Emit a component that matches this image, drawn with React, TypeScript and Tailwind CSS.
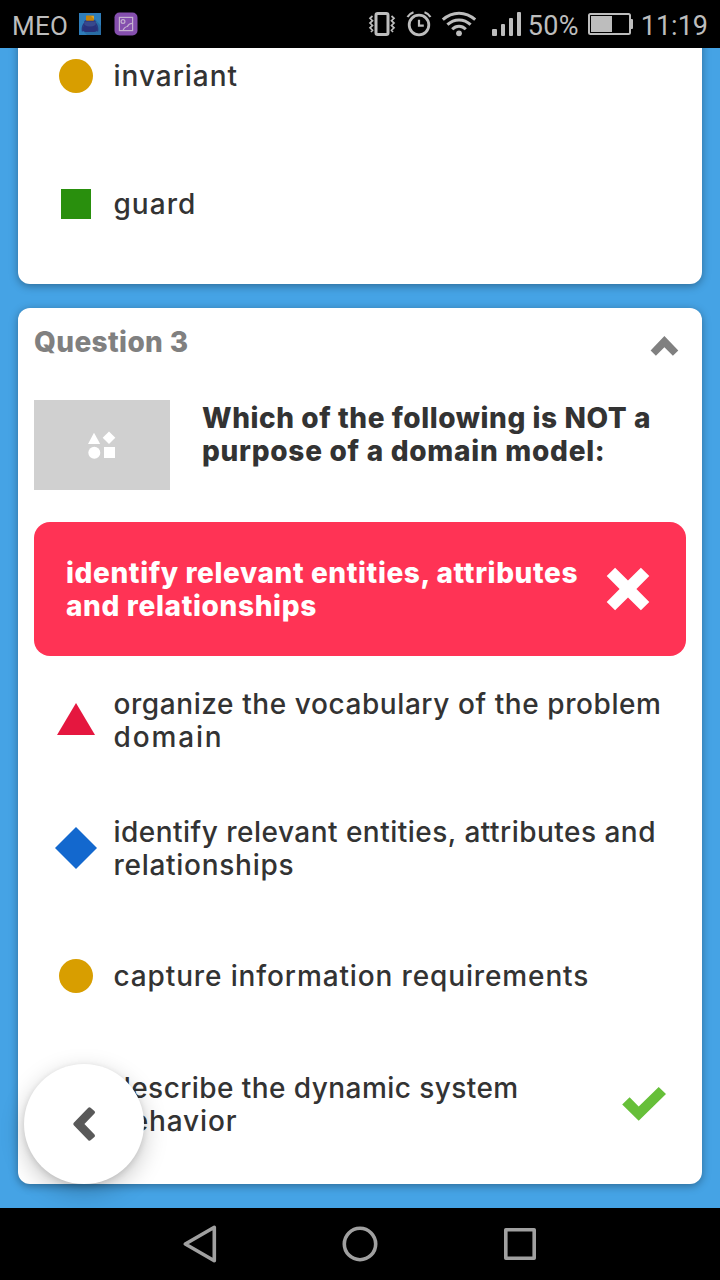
import type { ReactNode } from "react";

type Shape = "triangle" | "diamond" | "circle" | "square";

function ShapeIcon({ shape }: { shape: Shape }) {
  return (
    <svg width="44" height="44" viewBox="0 0 44 44">
      {shape === "triangle" && <path d="M22 5 L41 37 H3 Z" fill="#e5173f" />}
      {shape === "diamond" && <path d="M22 1 L43 22 L22 43 L1 22 Z" fill="#1368ce" />}
      {shape === "circle" && <circle cx="22" cy="22" r="17" fill="#d89e00" />}
      {shape === "square" && <rect x="7" y="7" width="30" height="30" fill="#298f0d" />}
    </svg>
  );
}

function Answer({ shape, children, correct }: { shape: Shape; children: ReactNode; correct?: boolean }) {
  return (
    <div className="flex h-32 items-center pl-1.5">
      <div className="mr-[1.5px] flex w-[72px] shrink-0 justify-center">
        <ShapeIcon shape={shape} />
      </div>
      <div className="flex-1 pt-px text-[28px] leading-[33px] font-medium whitespace-nowrap text-[#333333]">{children}</div>
      {correct && (
        <svg className="mr-5 shrink-0" width="44" height="34" viewBox="0 0 44 34">
          <path d="M7.6 10.3 L0.2 17.6 L16.7 33.8 L44 7 L36.7 0 L16.7 19.6 Z" fill="#66bf39" />
        </svg>
      )}
    </div>
  );
}

function StatusBar() {
  return (
    <header className="flex h-12 shrink-0 items-center bg-black font-['Roboto',sans-serif] text-[#bdbdbd]">
      <span className="ml-3 w-[67px] pt-[3px] text-[26px] leading-[30px] tracking-[0.2px]">MEO</span>
      <svg width="22" height="22" viewBox="0 0 22 22">
        <rect width="22" height="22" fill="#2e7dba" />
        <path d="M16 6 L22 13 V22 H8 L5 19 Z" fill="#286da4" />
        <path d="M5 10.5 Q2.6 14 3.4 18.5 M17 10.5 Q19.4 14 18.6 18.5" fill="none" stroke="#293a82" strokeWidth="1.3" />
        <path d="M5 10 Q5 7 8 7 H14 Q17 7 17 10 L18.3 16 Q18.5 19 15 19 H7 Q3.5 19 3.7 16 Z" fill="#28317a" />
        <path d="M5 8.5 H17 L16.5 12 Q11 15 5.5 12 Z" fill="#38498d" />
        <rect x="7" y="2.5" width="8" height="5.3" rx="0.7" fill="#c48309" />
        <path d="M12 3 H15 V6 Z" fill="#dda52a" />
      </svg>
      <svg className="ml-[13px]" width="24" height="24" viewBox="0 0 24 24">
        <rect x="0.5" y="0.5" width="23" height="23" rx="5" fill="#854fae" />
        <g fill="none" stroke="#c4b1cf" strokeWidth="1.2">
          <rect x="5.4" y="5.4" width="13.2" height="13.2" />
          <circle cx="9" cy="9.5" r="1.9" />
          <path d="M9 18.5 Q10.5 14.8 13.5 14.5 Q14.5 11.5 18.6 11.3" />
        </g>
      </svg>
      <div className="ml-auto flex items-center">
        <svg width="28" height="26" viewBox="0 0 28 26">
          <rect x="8" y="2.5" width="12" height="21" rx="1.7" fill="none" stroke="currentColor" strokeWidth="3" />
          <path
            d="M4.5 5 L2 7.3 L4.5 9.7 L2 12 L4.5 14.4 L2 16.8 L4.5 19.2 L3 21 M23.5 5 L26 7.3 L23.5 9.7 L26 12 L23.5 14.4 L26 16.8 L23.5 19.2 L25 21"
            fill="none"
            stroke="currentColor"
            strokeWidth="1.7"
          />
        </svg>
        <svg className="ml-2.5" width="26" height="26" viewBox="0 0 26 26" fill="none" stroke="currentColor">
          <circle cx="13" cy="14" r="9.8" strokeWidth="2.8" />
          <path d="M13 8.8 V14.7 H17.8" strokeWidth="2.2" />
          <path d="M1.5 6 Q3.5 2.6 7.5 1.3 M24.5 6 Q22.5 2.6 18.5 1.3" strokeWidth="2.2" />
        </svg>
        <svg className="ml-[9px]" width="36" height="26" viewBox="0 0 36 26" fill="none" stroke="currentColor" strokeWidth="3">
          <path d="M1.8 8.7 Q9 2.2 18 2.2 Q27 2.2 34.2 8.7" />
          <path d="M6.4 13.7 Q11.5 8.9 18 8.9 Q24.5 8.9 29.6 13.7" />
          <path d="M11.2 18.2 Q14.2 15.2 18 15.2 Q21.8 15.2 24.8 18.2" />
          <circle cx="18" cy="22.3" r="2.9" fill="currentColor" stroke="none" />
        </svg>
        <svg className="ml-3.5" width="30" height="26" viewBox="0 0 30 26" fill="currentColor">
          <rect x="1" y="18" width="5" height="7" rx="1" />
          <rect x="10" y="13" width="4" height="12" rx="1" />
          <rect x="18" y="7" width="4" height="18" rx="1" />
          <rect x="26" y="1" width="4" height="24" rx="1" />
        </svg>
        <span className="ml-[7px] w-[52px] pt-[3px] text-[27px] leading-[30px] tracking-[0.3px]">50%</span>
        <svg className="ml-2" width="46" height="24" viewBox="0 0 46 24">
          <rect x="1" y="2" width="41" height="20" rx="1.5" fill="none" stroke="currentColor" strokeWidth="2" />
          <rect x="3" y="4" width="21" height="16" fill="currentColor" />
          <rect x="42" y="7" width="3" height="10" rx="1" fill="currentColor" />
        </svg>
        <span className="mr-3 ml-[7px] pt-[3px] text-[27px] leading-[30px]">11:19</span>
      </div>
    </header>
  );
}

function NavBar() {
  return (
    <nav className="h-[72px] shrink-0 bg-black">
      <svg width="720" height="72" viewBox="0 0 720 72" fill="none" stroke="#a0a0a0" strokeWidth="3.6" strokeLinejoin="round">
        <path d="M185.3 36 L214.3 19.3 V52.7 Z" />
        <circle cx="360" cy="36" r="15.7" />
        <rect x="505.8" y="21.8" width="28.4" height="28.4" />
      </svg>
    </nav>
  );
}

export default function App() {
  return (
    <div className="flex h-[1280px] w-[720px] flex-col overflow-hidden bg-black font-['Inter','Open_Sans',sans-serif]">
      <StatusBar />
      <main className="relative flex h-[1160px] shrink-0 flex-col gap-6 overflow-hidden bg-[#45a3e5] px-[18px]">
        <section className="-mt-9 h-[272px] shrink-0 rounded-b-xl bg-white px-4 shadow-[0_2px_8px_rgba(0,0,0,0.35)]">
          <Answer shape="circle"><span className="tracking-[0.97px]">invariant</span></Answer>
          <Answer shape="square"><span className="tracking-[1.02px]">guard</span></Answer>
        </section>

        <section className="h-[876px] shrink-0 rounded-xl bg-white px-4 shadow-[0_2px_8px_rgba(0,0,0,0.35)]">
          <div className="flex h-[92px] justify-between pt-[18px]">
            <h2 className="text-[28px] leading-[33px] font-extrabold tracking-[0.37px] text-[#808080]">Question 3</h2>
            <svg className="mt-[10px] mr-[7px]" width="29" height="20" viewBox="0 0 29 20">
              <path d="M14.4 0 L0.6 14.5 L5.9 19.8 L14.4 11.3 L22.9 19.8 L28.3 14.5 Z" fill="#808080" />
            </svg>
          </div>
          <div className="flex h-[90px]">
            <div className="flex w-[136px] items-center justify-center bg-[#d0d0d0]">
              <svg width="28" height="28" viewBox="0 0 28 28" fill="#ffffff">
                <path d="M6 1.7 L12.2 13 H0 Z" />
                <path d="M21 0.5 L27.3 6.8 L21 13.1 L14.7 6.8 Z" />
                <circle cx="6.3" cy="21.7" r="6" />
                <rect x="16" y="16" width="11" height="11" />
              </svg>
            </div>
            <h3 className="ml-8 pt-0.5 text-[28px] leading-[33px] font-extrabold whitespace-nowrap text-[#333333]">
              <span className="tracking-[0.57px]">Which of the following is NOT a</span>
              <br />
              <span className="tracking-[0.73px]">purpose of a domain model:</span>
            </h3>
          </div>
          <div className="mt-8 flex h-[134px] items-center justify-between rounded-2xl bg-[#ff3355] pr-[36px] pl-8 text-white">
            <p className="pt-px text-[28px] leading-[33px] font-extrabold whitespace-nowrap">
              <span className="tracking-[0.61px]">identify relevant entities, attributes</span>
              <br />
              <span className="tracking-[0.65px]">and relationships</span>
            </p>
            <svg className="shrink-0" width="44" height="44" viewBox="0 0 44 44">
              <path
                d="M9.1 0.7 L22 13.6 L34.9 0.7 L43.3 9.1 L30.4 22 L43.3 34.9 L34.9 43.3 L22 30.4 L9.1 43.3 L0.7 34.9 L13.6 22 L0.7 9.1 Z"
                fill="#ffffff"
              />
            </svg>
          </div>
          <Answer shape="triangle">
            <span className="tracking-[0.58px]">organize the vocabulary of the problem</span>
            <br />
            <span className="tracking-[1.85px]">domain</span>
          </Answer>
          <Answer shape="diamond">
            <span className="tracking-[0.48px]">identify relevant entities, attributes and</span>
            <br />
            <span className="tracking-[0.72px]">relationships</span>
          </Answer>
          <Answer shape="circle"><span className="tracking-[0.87px]">capture information requirements</span></Answer>
          <Answer shape="square" correct>
            <span className="tracking-[0.43px]">describe the dynamic system</span>
            <br />
            <span className="tracking-[0.87px]">behavior</span>
          </Answer>
        </section>

        <button
          aria-label="Back"
          className="absolute bottom-6 left-6 flex size-[120px] items-center justify-center rounded-full bg-white shadow-[0_8px_24px_rgba(0,0,0,0.22),0_2px_6px_rgba(0,0,0,0.12)]"
        >
          <svg width="24" height="36" viewBox="0 0 24 36">
            <path d="M17.5 3 L3 18 L17.5 33 L21.3 29.8 L10 18 L21.3 6.2 Z" fill="#595959" stroke="#595959" strokeWidth="3.4" strokeLinejoin="round" />
          </svg>
        </button>
      </main>
      <NavBar />
    </div>
  );
}
